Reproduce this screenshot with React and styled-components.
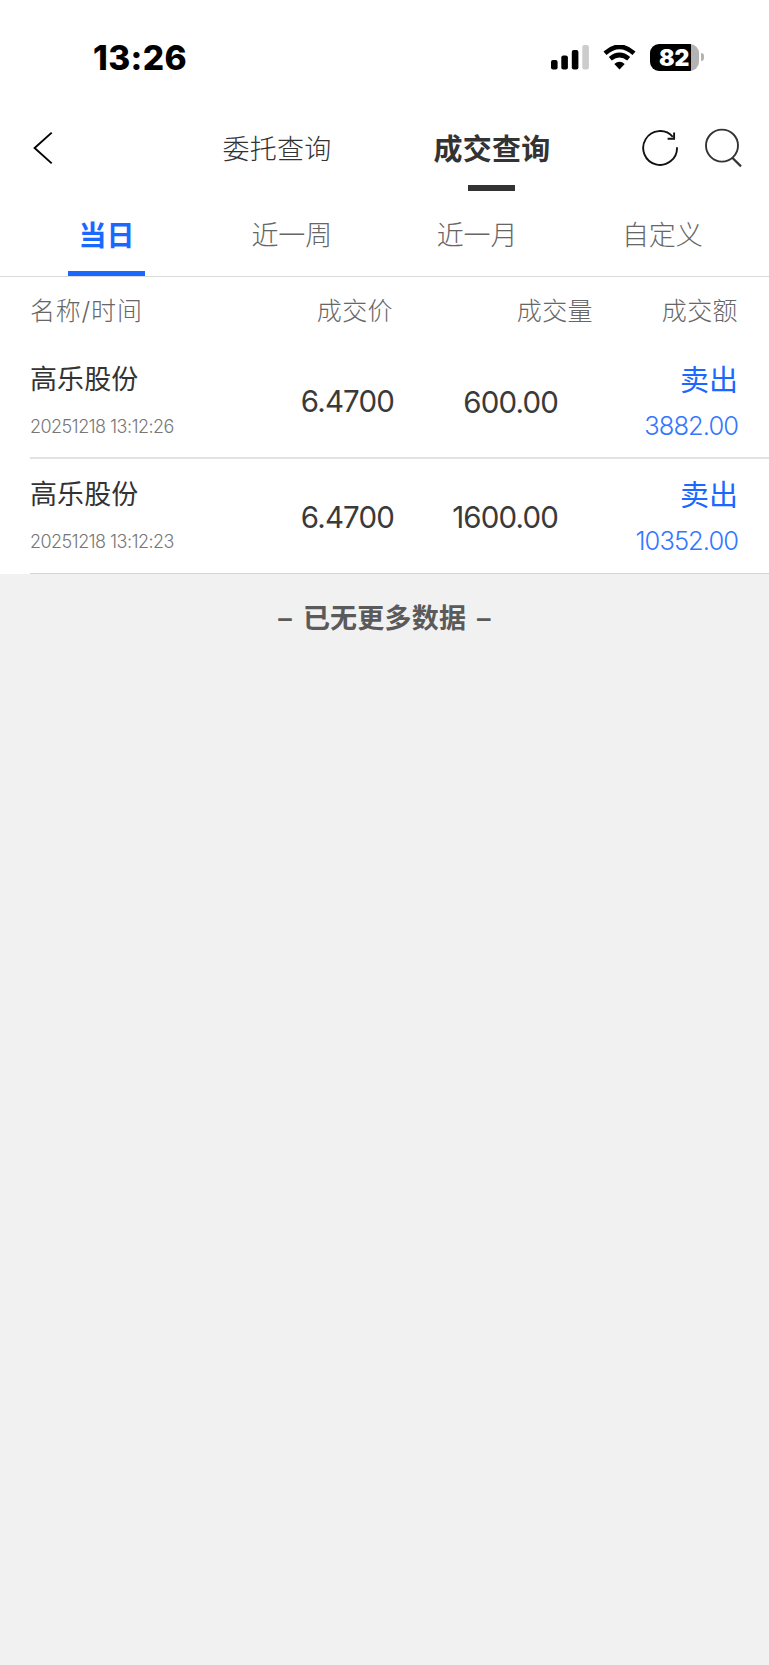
import React from 'react'
import styled, { createGlobalStyle } from 'styled-components';

const tabs = ['当日', '近一周', '近一月', '自定义'];

const trades = [
    { id: 1, name: '高乐股份', time: '20251218 13:12:26', price: '6.4700', volume: '600.00', side: '卖出', amount: '3882.00' },
    { id: 2, name: '高乐股份', time: '20251218 13:12:23', price: '6.4700', volume: '1600.00', side: '卖出', amount: '10352.00' },
];

function StatusBar() {
    return (
        <Status>
            <Clock>13:26</Clock>
            <StatusIcons>
                <svg width="38" height="25" viewBox="0 0 38 25">
                    <rect x="0" y="15" width="6.6" height="9.4" rx="2" />
                    <rect x="10.3" y="10.5" width="6.6" height="13.9" rx="2" />
                    <rect x="20.8" y="5" width="6.6" height="19.4" rx="2" />
                    <rect x="31.3" y="0" width="6.6" height="24.4" rx="2" fill="#ccc" />
                </svg>
                <WifiIcon width="33" height="25" viewBox="0 0 33 25">
                    <path d="M2 8.2 Q16.5 -4.6 31 8.2" fill="none" stroke="#000" strokeWidth="4.6" />
                    <path d="M7.3 13.8 Q16.5 6.2 25.7 13.8" fill="none" stroke="#000" strokeWidth="4.6" />
                    <path d="M11.3 19 Q16.5 14.6 21.7 19 L16.5 24.4 Z" />
                </WifiIcon>
                <Battery>
                    <Level>82</Level>
                </Battery>
                <BatteryTip />
            </StatusIcons>
        </Status>
    )
}

function TradeRow({ trade }) {
    return (
        <Row>
            <NameCell>
                <StockName>{trade.name}</StockName>
                <Time>{trade.time}</Time>
            </NameCell>
            <Price>{trade.price}</Price>
            <Volume>{trade.volume}</Volume>
            <AmountCell>
                <Side>{trade.side}</Side>
                <Amount>{trade.amount}</Amount>
            </AmountCell>
        </Row>
    )
}

function App() {
    return (
        <>
            <GlobalStyle />
            <Page>
                <StatusBar />

                <Header>
                    <BackButton aria-label="返回">
                        <svg width="20" height="34" viewBox="0 0 20 34" fill="none" stroke="#000" strokeWidth="1.9">
                            <path d="M18.7 1.6 L1.6 17 L18.7 32.4" />
                        </svg>
                    </BackButton>
                    <Modes>
                        <Mode>委托查询</Mode>
                        <Mode $active>成交查询</Mode>
                    </Modes>
                    <Actions>
                        <IconButton aria-label="刷新">
                            <svg width="38" height="38" viewBox="0 0 38 38" fill="none" stroke="#111" strokeWidth="1.9">
                                <path d="M36 18.2 A16.9 16.9 0 1 1 31.8 7.8" />
                                <path d="M33.1 3.4 V9.7 H26.6" />
                            </svg>
                        </IconButton>
                        <IconButton aria-label="搜索">
                            <svg width="38" height="40" viewBox="0 0 38 40" fill="none" stroke="#333" strokeWidth="1.9">
                                <circle cx="18" cy="17.6" r="16" />
                                <path d="M28.3 29.8 L37 38.4" strokeWidth="2.2" />
                            </svg>
                        </IconButton>
                    </Actions>
                </Header>

                <Tabs>
                    {tabs.map((tab, i) => (
                        <Tab key={tab} $active={i === 0}>{tab}</Tab>
                    ))}
                </Tabs>

                <Columns>
                    <ColumnTitle>名称/时间</ColumnTitle>
                    <ColumnTitle $right>成交价</ColumnTitle>
                    <ColumnTitle $right>成交量</ColumnTitle>
                    <ColumnTitle $right>成交额</ColumnTitle>
                </Columns>

                {/* list of trades */}
                <List>
                    {trades.map((trade) => <TradeRow key={trade.id} trade={trade} />)}
                </List>

                <NoMore>– 已无更多数据 –</NoMore>
            </Page>
        </>
    )
}

export default App;

const GlobalStyle = createGlobalStyle`
    * {
        box-sizing: border-box;
    }

    body {
        margin: 0;
        background: #f1f1f1;
        font-family: Inter, "Noto Sans CJK SC", sans-serif;
    }
`;

const Page = styled.div`
    min-height: 100vh;
    background: #f1f1f1;
`;

const Status = styled.div`
    display: flex;
    justify-content: space-between;
    align-items: center;
    height: 112px;
    padding: 2px 65px 0 93px;
    background: white;
`;

const Clock = styled.div`
    padding-top: 1px;
    font-size: 33.5px;
    font-weight: 800;
    letter-spacing: 0.4px;
    color: #000;
`;

const StatusIcons = styled.div`
    display: flex;
    align-items: center;
`;

const WifiIcon = styled.svg`
    margin: 0 14px 0 14px;
`;

const Battery = styled.div`
    width: 49px;
    height: 27px;
    border-radius: 9px;
    background: linear-gradient(to right, #000 41px, #b3b3b3 41px);
`;

const Level = styled.div`
    padding-left: 9px;
    font-size: 23px;
    font-weight: 900;
    line-height: 28px;
    color: white;
`;

const BatteryTip = styled.div`
    width: 3px;
    height: 8px;
    margin-left: 2px;
    border-radius: 0 4px 4px 0;
    background: #b3b3b3;
`;

const Header = styled.div`
    display: grid;
    grid-template-columns: 169px 430px 170px;
    height: 84px;
    background: white;
`;

const IconButton = styled.button`
    display: flex;
    align-items: flex-start;
    padding: 0;
    border: none;
    background: none;
`;

const BackButton = styled(IconButton)`
    padding: 19px 0 0 33px;
`;

const Modes = styled.div`
    display: grid;
    grid-template-columns: 1fr 1fr;
`;

const Mode = styled.div`
    display: flex;
    flex-direction: column;
    align-items: center;
    padding-top: 18px;
    padding-left: 1px;
    font-size: ${(props) => props.$active ? '29px' : '27px'};
    font-weight: ${(props) => props.$active ? 700 : 300};
    line-height: 40px;
    letter-spacing: 0.2px;
    color: #333;

    &::after {
        content: '';
        width: 47px;
        height: 6px;
        margin-top: 15px;
        margin-right: 2px;
        background: ${(props) => props.$active ? '#333' : 'transparent'};
    }
`;

const Actions = styled.div`
    display: flex;
    gap: 25px;
    padding: 16px 0 0 42px;

    svg {
        flex: none;
    }

    button:first-child {
        padding-top: 1px;
    }
`;

const Tabs = styled.div`
    display: grid;
    grid-template-columns: repeat(4, 1fr);
    height: 81px;
    padding: 0 14px;
    border-bottom: 1px solid #dadada;
    background: white;
`;

const Tab = styled.div`
    display: flex;
    flex-direction: column;
    justify-content: space-between;
    align-items: center;
    padding-top: 20px;
    font-size: ${(props) => props.$active ? '28px' : '27px'};
    font-weight: ${(props) => props.$active ? 700 : 300};
    line-height: 40px;
    color: ${(props) => props.$active ? '#1b68ff' : '#666'};

    &::after {
        content: '';
        width: 77px;
        height: 5px;
        background: ${(props) => props.$active ? '#1b68ff' : 'transparent'};
    }
`;

const Columns = styled.div`
    display: grid;
    grid-template-columns: 170px 193px 200px 145px;
    align-items: center;
    height: 67px;
    padding: 0 0 4px 30px;
    background: white;
`;

const ColumnTitle = styled.div`
    font-size: 25px;
    font-weight: 300;
    letter-spacing: ${(props) => props.$right ? '0.4px' : '0.8px'};
    color: #666;
    text-align: ${(props) => props.$right ? 'right' : 'left'};
`;

const List = styled.div`
    padding-left: 30px;
    background: white;
`;

const Row = styled.div`
    display: grid;
    grid-template-columns: 170px 194px 164px 180px;
    align-items: center;
    height: 115px;
    border-bottom: 2px solid #e2e2e2;

    &:last-child {
        border-bottom: 1px solid #d6d6d6;
    }
`;

const NameCell = styled.div`
    display: flex;
    flex-direction: column;
    padding-bottom: 3px;
`;

const StockName = styled.div`
    font-size: 27px;
    line-height: 40px;
    letter-spacing: 0.1px;
    color: #333;
`;

const Time = styled.div`
    margin-top: 15px;
    font-size: 18px;
    font-weight: 300;
    line-height: 24px;
    letter-spacing: -0.57px;
    color: #777;
    white-space: nowrap;
`;

const Price = styled.div`
    padding-top: 1px;
    font-size: 29.5px;
    font-weight: 400;
    letter-spacing: -0.85px;
    color: #3a3a3a;
    text-align: right;
`;

const Volume = styled(Price)`
    padding-top: 2px;
`;

const AmountCell = styled.div`
    padding-top: 5px;
    text-align: right;
    color: #1b68ff;
`;

const Side = styled.div`
    font-size: 29px;
    line-height: 44px;
`;

const Amount = styled.div`
    font-size: 25.5px;
    font-weight: 300;
    line-height: 45px;
    letter-spacing: -0.95px;
    color: #3377ff;
`;

const NoMore = styled.div`
    padding-top: 25px;
    font-size: 27px;
    font-weight: 600;
    line-height: 40px;
    letter-spacing: 0.2px;
    word-spacing: 4px;
    color: #5a5a5a;
    text-align: center;
`;
